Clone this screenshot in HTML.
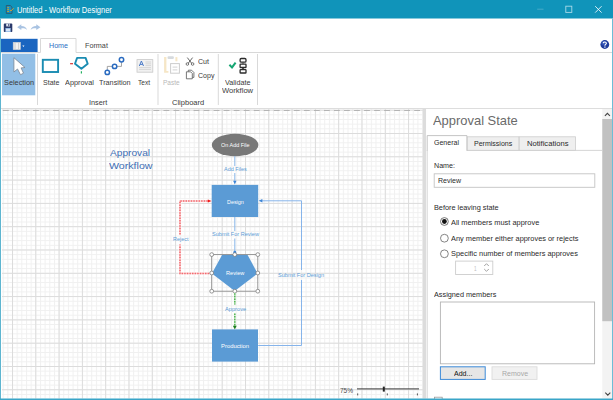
<!DOCTYPE html>
<html><head><meta charset="utf-8">
<style>
*{box-sizing:border-box;margin:0;padding:0}
html,body{width:613px;height:400px;overflow:hidden;background:#fff}
body{font-family:"Liberation Sans",sans-serif;font-size:8px;color:#333;position:relative}
.t{position:absolute;white-space:nowrap;line-height:1;transform-origin:0 0;display:inline-block}
svg{position:absolute;left:0;top:0}
</style></head><body>
<svg width="613" height="400" viewBox="0 0 613 400">
<defs>
<pattern id="minor" x="12.0" y="109.7" width="4.66" height="4.66" patternUnits="userSpaceOnUse">
<path d="M0.5 0V4.66M0 0.5H4.66" stroke="#f0f0f0" stroke-width="1" fill="none"/>
</pattern>
<pattern id="major" x="12.0" y="109.7" width="23.3" height="23.3" patternUnits="userSpaceOnUse">
<path d="M0.5 0V23.3M0 0.5H23.3" stroke="#dcdcdc" stroke-width="1" fill="none"/>
</pattern>
</defs>
<!-- window chrome -->
<rect x="0" y="0" width="613" height="18.5" fill="#1094ba"/>
<rect x="0" y="18.5" width="1" height="382" fill="#5eb5d0"/>
<rect x="612" y="18.5" width="1" height="382" fill="#6dbdd6"/>
<!-- title icon -->
<g>
<path d="M6.3 5.5H10.3L12 7.2V13.4H6.3Z" fill="#1a8fc0" stroke="#2d586c" stroke-width="0.9"/>
<rect x="7.3" y="7.2" width="1.6" height="1" fill="#d9a520"/>
<rect x="7.3" y="9.1" width="1.6" height="1" fill="#d9a520"/>
<rect x="7.3" y="11" width="1.6" height="1" fill="#d9a520"/>
<path d="M10 10.2L10.9 11L13.6 8.2" stroke="#d9a030" stroke-width="1" fill="none"/>
</g>
<!-- window buttons -->
<path d="M537.2 9.2H543.5" stroke="#46aac8" stroke-width="1"/>
<rect x="565.8" y="6.2" width="6" height="6.2" fill="none" stroke="#a9d9e8" stroke-width="0.9"/>
<path d="M595.2 6.2L601.6 12.6M601.6 6.2L595.2 12.6" stroke="#e8f5fa" stroke-width="0.9"/>

<!-- QAT -->
<g>
<rect x="3.8" y="23.6" width="8.5" height="8.4" rx="0.8" fill="#2b3a6b"/>
<rect x="6.2" y="23.6" width="3.8" height="2.8" fill="#dfe6f2"/>
<rect x="8.3" y="24" width="1" height="2" fill="#2b3a6b"/>
<rect x="5.4" y="28" width="5.3" height="4" fill="#9cc0ea"/>
<rect x="6" y="29.2" width="4" height="1.6" fill="#e6eefa"/>
</g>
<path d="M17.2 27.2L21.3 24.3V26C24.3 26 26.4 27.4 27 29.9C25.4 28.6 23.6 28.2 21.3 28.4V30.1Z" fill="#a9c3e2"/>
<path d="M40.4 27.2L36.3 24.3V26C33.3 26 31.2 27.4 30.6 29.9C32.2 28.6 34 28.2 36.3 28.4V30.1Z" fill="#a9c3e2"/>

<!-- tabs -->
<rect x="1" y="38.8" width="36.6" height="13.4" fill="#1a65c0"/>
<rect x="13.2" y="42.3" width="7.2" height="7.3" fill="#f2f2f2" stroke="#cfcfcf" stroke-width="0.6"/>
<path d="M15 42.5V49.5M18.6 42.5V49.5" stroke="#c4c4c4" stroke-width="0.8"/>
<path d="M22.3 45.6H24.5L23.4 46.9Z" fill="#ffffff"/>
<path d="M1 52.5H40.5V38.5H76V52.5H612" fill="none" stroke="#d8d8d8" stroke-width="1"/>
<!-- help -->
<circle cx="604.8" cy="44.5" r="4.4" fill="#1f3c9c"/>
<circle cx="603.8" cy="43.2" r="2.4" fill="#3b5cc0" opacity="0.7"/>
<path d="M603.3 43.2C603.3 41.6 606.4 41.6 606.4 43.3C606.4 44.4 604.9 44.5 604.9 45.7" stroke="#fff" stroke-width="1.1" fill="none"/>
<rect x="604.3" y="46.5" width="1.2" height="1.2" fill="#fff"/>

<!-- ribbon -->
<rect x="2" y="53.7" width="33.3" height="41.6" fill="#92bfe6"/>
<path d="M37.5 54V105M158 54V105M218.3 54V105M257.5 54V105" stroke="#d9d9d9" stroke-width="1"/>
<path d="M1 108.5H612" stroke="#dddddd" stroke-width="1"/>
<!-- cursor -->
<path d="M13.9 57.7V72L17.5 69L20.5 74.7L23.5 73.2L21.1 67.9L25 67.5Z" fill="#fff" stroke="#7b8794" stroke-width="0.8" stroke-linejoin="miter"/>
<!-- state -->
<rect x="42.8" y="59.8" width="15.3" height="12.2" fill="none" stroke="#1a8cb2" stroke-width="1.9"/>
<!-- approval -->
<path d="M77.1 57.9H85.6L87.7 63.7L81.4 68.8L75 63.7Z" fill="none" stroke="#1a8cb2" stroke-width="1.9" stroke-linejoin="round"/>
<path d="M70.1 63.7H73" stroke="#d83030" stroke-width="1.2"/>
<path d="M81.4 71.2V73.6" stroke="#22b060" stroke-width="1.2"/>
<!-- transition -->
<path d="M107.3 70V66.4H112.2M117 66.4H121.5V62.2" stroke="#9a9a9a" stroke-width="0.9" fill="none"/>
<circle cx="107.3" cy="72.4" r="2.2" fill="#fff" stroke="#2a6bc0" stroke-width="1.5"/>
<circle cx="114.6" cy="66.4" r="2.2" fill="#fff" stroke="#2a6bc0" stroke-width="1.5"/>
<circle cx="121.5" cy="59.7" r="2.2" fill="#fff" stroke="#2a6bc0" stroke-width="1.5"/>
<!-- text icon -->
<rect x="137" y="59.6" width="15.8" height="12.6" fill="#f1f1f1" stroke="#c9c9c9" stroke-width="0.8"/>
<path d="M145.5 62H151M145.5 63.8H151M145.5 65.6H151M139 67.6H151M139 69.4H151" stroke="#cfcfcf" stroke-width="0.8"/>
<path d="M139.3 66L141.4 61L143.5 66M140.1 64.4H142.7" stroke="#3b6fc4" stroke-width="0.9" fill="none"/>
<!-- paste -->
<path d="M164.1 57.1H166.4V71H168.4V72.7H164.1Z" fill="#f6e6c6"/>
<rect x="175.4" y="57.1" width="2" height="4.2" fill="#f6e6c6"/>
<rect x="167.5" y="56.2" width="6.4" height="2.7" rx="1.2" fill="#d6dade"/>
<rect x="170.6" y="63.6" width="8.8" height="9.6" fill="#fff" stroke="#cdcdcd" stroke-width="1"/>
<path d="M172.6 67.1H177.4M172.6 69.9H177.4" stroke="#d2d2d2" stroke-width="1"/>
<!-- cut -->
<path d="M187.3 57.6L191.6 63.2M192.6 57.6L188.3 63.2" stroke="#555" stroke-width="0.9"/>
<circle cx="187.4" cy="64" r="1.3" fill="none" stroke="#555" stroke-width="0.8"/>
<circle cx="192.6" cy="64" r="1.3" fill="none" stroke="#555" stroke-width="0.8"/>
<!-- copy -->
<path d="M186.4 71.8H190.6L192.3 73.5V78.8H186.4Z" fill="#fff" stroke="#555" stroke-width="0.8"/>
<path d="M188.3 71.6V70.2H191.6L193.9 72.5V77.4H192.5" fill="none" stroke="#555" stroke-width="0.8"/>
<!-- validate -->
<path d="M229.4 64.8L232 67.4L235.6 62.6" stroke="#17a673" stroke-width="2" fill="none"/>
<rect x="240.1" y="58.5" width="5.9" height="3.7" rx="1.2" fill="#fff" stroke="#2b2b2b" stroke-width="1.3"/>
<rect x="240.1" y="64.1" width="5.9" height="3.4" rx="0.6" fill="#fff" stroke="#2b2b2b" stroke-width="1.3"/>
<rect x="240.1" y="69.6" width="5.9" height="3.4" rx="0.6" fill="#fff" stroke="#2b2b2b" stroke-width="1.3"/>
<path d="M243 62.8V63.5M243 68.1V69" stroke="#2b2b2b" stroke-width="1.6"/>

<!-- canvas grid -->
<rect x="2" y="109" width="421" height="289.5" fill="url(#minor)"/>
<rect x="2" y="109" width="421" height="289.5" fill="url(#major)"/>
<path d="M3 110.5H423" stroke="#b4b4b4" stroke-width="1" stroke-dasharray="5.8 4.23"/>

<!-- diagram -->
<g fill="none">
<ellipse cx="235.1" cy="145" rx="23.3" ry="11.2" fill="#787878"/>
<path d="M234.8 156.2V166M234.8 173V182" stroke="#8ab8ea" stroke-width="1"/>
<path d="M233.1 180.8H236.5L234.8 184.6Z" fill="#3f86d6"/>
<rect x="211.7" y="184.9" width="46.5" height="32.1" fill="#5b9bd5"/>
<path d="M234.8 217V231M234.8 238.5V252.5" stroke="#8ab8ea" stroke-width="1"/>
<circle cx="234.8" cy="252.2" r="1.4" fill="#3f86d6"/>
<!-- reject -->
<path d="M211.7 273.4H180V244.5M180 234.5V201H208" stroke="#ffffff" stroke-width="2.8"/>
<path d="M211.7 273.4H180V244.5M180 234.5V201H208" stroke="#fbd3d3" stroke-width="1.7"/>
<path d="M211.7 273.4H180V244.5M180 234.5V201H208" stroke="#f26a70" stroke-width="1.5" stroke-dasharray="1.5 1.1"/>
<path d="M207.8 199.4V202.6L211.6 201Z" fill="#f01818"/>
<!-- submit for design -->
<path d="M258.2 345.5H301.5V280M301.5 270V200.8H262" stroke="#86b4ea" stroke-width="1"/>
<path d="M262.4 199.1V202.5L258.6 200.8Z" fill="#3f86d6"/>
<!-- review -->
<path d="M222.2 254.8H247.5L257.6 273.5L234.7 291L211.9 273.5Z" fill="#5b9bd5"/>
<rect x="211.7" y="254.6" width="46.1" height="36.6" stroke="#8c8c8c" stroke-width="0.9"/>
<g fill="#fff" stroke="#7d7d7d" stroke-width="0.8">
<circle cx="211.7" cy="254.6" r="1.9"/><circle cx="234.8" cy="254.6" r="1.9"/><circle cx="257.8" cy="254.6" r="1.9"/>
<circle cx="211.7" cy="273" r="1.9"/><circle cx="257.8" cy="273" r="1.9"/>
<circle cx="211.7" cy="291.2" r="1.9"/><circle cx="234.8" cy="291.2" r="1.9"/><circle cx="257.8" cy="291.2" r="1.9"/>
</g>
<!-- approve -->
<path d="M234.8 293.2V304.5M234.8 313.5V327" stroke="#ffffff" stroke-width="2.6"/>
<path d="M234.8 293.2V304.5M234.8 313.5V327" stroke="#cdebcd" stroke-width="1.7"/>
<path d="M234.8 293.2V304.5M234.8 313.5V327" stroke="#4db04d" stroke-width="1.4" stroke-dasharray="1.5 1.1"/>
<path d="M232.9 325.8H236.7L234.8 329.6Z" fill="#1d7d1d"/>
<rect x="212" y="329.4" width="46" height="32.2" fill="#5b9bd5"/>
</g>
<!-- zoom slider -->
<path d="M357 388.9H419" stroke="#3a3a3a" stroke-width="1"/>
<rect x="382.8" y="386.6" width="2" height="5" fill="#222"/>
<path d="M357.7 393.4V395.4M387.3 393.4V395.4M417.4 393.4V395.4" stroke="#444" stroke-width="0.9"/>

<!-- panel -->
<rect x="422.8" y="109" width="3.4" height="289.5" fill="#dcdcdc"/>
<rect x="426.2" y="109" width="176" height="289.5" fill="#fff"/>
<!-- tabs -->
<rect x="467" y="136.8" width="52" height="13.6" fill="#efefef" stroke="#cccccc" stroke-width="0.8"/>
<rect x="519.2" y="136.8" width="56.3" height="13.6" fill="#efefef" stroke="#cccccc" stroke-width="0.8"/>
<path d="M427.2 398.5V150.4M466.9 150.4H602" stroke="#d0d0d0" stroke-width="0.9" fill="none"/>
<path d="M427.2 151V135.6H466.9V150.6" stroke="#bdbdbd" stroke-width="0.9" fill="#fff"/>
<!-- input -->
<rect x="434.2" y="173.8" width="160.6" height="13.5" fill="#fff" stroke="#c4c4c4" stroke-width="0.9"/>
<!-- radios -->
<circle cx="444.4" cy="221.5" r="3.9" fill="#fff" stroke="#555" stroke-width="0.8"/>
<circle cx="444.4" cy="221.5" r="2.4" fill="#111"/>
<circle cx="444.4" cy="238.2" r="3.9" fill="#fff" stroke="#666" stroke-width="0.8"/>
<circle cx="444.4" cy="253.8" r="3.9" fill="#fff" stroke="#666" stroke-width="0.8"/>
<!-- spinner -->
<rect x="455.6" y="261.1" width="37.2" height="13.4" fill="#fff" stroke="#cdcdcd" stroke-width="0.9"/>
<path d="M484.2 266L486.5 263.7L488.8 266M484.2 269L486.5 271.3L488.8 269" stroke="#8a8a8a" stroke-width="0.8" fill="none"/>
<!-- listbox -->
<rect x="440.4" y="302" width="154.2" height="61.8" fill="#fff" stroke="#b4b4b4" stroke-width="0.9"/>
<!-- buttons -->
<rect x="440.4" y="366.8" width="44.8" height="12.6" fill="#e6e6e6" stroke="#3c8ad8" stroke-width="1"/>
<rect x="492" y="366.8" width="45" height="12.6" fill="#f1f1f1" stroke="#dcdcdc" stroke-width="0.9"/>
<!-- checkbox cut -->
<rect x="434.4" y="397.2" width="7.8" height="6" fill="#fff" stroke="#999" stroke-width="0.8"/>
<!-- scrollbar -->
<rect x="602.3" y="109" width="9.7" height="289.5" fill="#f3f3f3"/>
<rect x="602.3" y="119" width="9.7" height="202.2" fill="#c1c1c1"/>
<path d="M604.9 115.8L607.4 113.3L609.9 115.8" stroke="#444" stroke-width="1.1" fill="none"/>
<path d="M605.3 392.6L607.8 395.1L610.3 392.6" stroke="#444" stroke-width="1.1" fill="none"/>

<rect x="0" y="398.5" width="613" height="1.5" fill="#3aa5c8"/>
</svg>
<div class="t" id="t0" style="left:17.2px;top:6.27px;font-size:8.3px;color:#ffffff;font-weight:400;transform:scaleX(0.9030)">Untitled - Workflow Designer</div>
<div class="t" id="t1" style="left:48.9px;top:42.47px;font-size:7.6px;color:#2b6fc4;font-weight:400;transform:scaleX(0.9375)">Home</div>
<div class="t" id="t2" style="left:85.2px;top:42.47px;font-size:7.6px;color:#444;font-weight:400;transform:scaleX(0.9517)">Format</div>
<div class="t" id="t3" style="left:3.5px;top:79.17px;font-size:7.6px;color:#3a3a3a;font-weight:400;transform:scaleX(0.9632)">Selection</div>
<div class="t" id="t4" style="left:42.5px;top:79.17px;font-size:7.6px;color:#3a3a3a;font-weight:400;transform:scaleX(0.9248)">State</div>
<div class="t" id="t5" style="left:65px;top:79.17px;font-size:7.6px;color:#3a3a3a;font-weight:400;transform:scaleX(0.9672)">Approval</div>
<div class="t" id="t6" style="left:98.6px;top:79.17px;font-size:7.6px;color:#3a3a3a;font-weight:400;transform:scaleX(0.9558)">Transition</div>
<div class="t" id="t7" style="left:138.3px;top:79.17px;font-size:7.6px;color:#3a3a3a;font-weight:400;transform:scaleX(0.8682)">Text</div>
<div class="t" id="t8" style="left:88.5px;top:98.87px;font-size:7.6px;color:#3a3a3a;font-weight:400;transform:scaleX(0.9579)">Insert</div>
<div class="t" id="t9" style="left:163.1px;top:79.17px;font-size:7.6px;color:#b8b8b8;font-weight:400;transform:scaleX(0.8599)">Paste</div>
<div class="t" id="t10" style="left:197.5px;top:57.97px;font-size:7.6px;color:#3a3a3a;font-weight:400;transform:scaleX(0.9300)">Cut</div>
<div class="t" id="t11" style="left:197.5px;top:71.97px;font-size:7.6px;color:#3a3a3a;font-weight:400;transform:scaleX(0.9248)">Copy</div>
<div class="t" id="t12" style="left:172.2px;top:98.87px;font-size:7.6px;color:#3a3a3a;font-weight:400;transform:scaleX(0.9903)">Clipboard</div>
<div class="t" id="t13" style="left:225px;top:79.17px;font-size:7.6px;color:#3a3a3a;font-weight:400;transform:scaleX(0.9483)">Validate</div>
<div class="t" id="t14" style="left:222.3px;top:87.27px;font-size:7.6px;color:#3a3a3a;font-weight:400;transform:scaleX(1.0002)">Workflow</div>
<div class="t" id="t15" style="left:110.2px;top:147.50px;font-size:9.8px;color:#3f6fb5;font-weight:400;transform:scaleX(1.0369)">Approval</div>
<div class="t" id="t16" style="left:108.6px;top:161.30px;font-size:9.8px;color:#3f6fb5;font-weight:400;transform:scaleX(1.0845)">Workflow</div>
<div class="t" id="t17" style="left:220.5px;top:142.32px;font-size:6px;color:#ffffff;font-weight:400;transform:scaleX(0.9088)">On Add File</div>
<div class="t" id="t18" style="left:223.8px;top:166.32px;font-size:6px;color:#5b9bd5;font-weight:400;transform:scaleX(0.9074)">Add Files</div>
<div class="t" id="t19" style="left:226.7px;top:198.52px;font-size:6px;color:#ffffff;font-weight:400;transform:scaleX(0.8990)">Design</div>
<div class="t" id="t20" style="left:172.8px;top:236.02px;font-size:6px;color:#5b9bd5;font-weight:400;transform:scaleX(0.9051)">Reject</div>
<div class="t" id="t21" style="left:211.7px;top:231.32px;font-size:6px;color:#5b9bd5;font-weight:400;transform:scaleX(0.9253)">Submit For Review</div>
<div class="t" id="t22" style="left:225.7px;top:270.42px;font-size:6px;color:#ffffff;font-weight:400;transform:scaleX(0.9346)">Review</div>
<div class="t" id="t23" style="left:224.8px;top:305.52px;font-size:6px;color:#5b9bd5;font-weight:400;transform:scaleX(0.9481)">Approve</div>
<div class="t" id="t24" style="left:278.3px;top:272.02px;font-size:6px;color:#5b9bd5;font-weight:400;transform:scaleX(0.9258)">Submit For Design</div>
<div class="t" id="t25" style="left:221.1px;top:342.92px;font-size:6px;color:#ffffff;font-weight:400;transform:scaleX(0.9795)">Production</div>
<div class="t" id="t26" style="left:339.8px;top:386.73px;font-size:8px;color:#484848;font-weight:400;transform:scaleX(0.8117)">75%</div>
<div class="t" id="t27" style="left:433px;top:113.66px;font-size:13.4px;color:#6a6a6a;font-weight:400;transform:scaleX(0.9654)">Approval State</div>
<div class="t" id="t28" style="left:434px;top:139.07px;font-size:7.6px;color:#2a2a2a;font-weight:400;transform:scaleX(0.9249)">General</div>
<div class="t" id="t29" style="left:473.7px;top:140.47px;font-size:7.6px;color:#2a2a2a;font-weight:400;transform:scaleX(0.9236)">Permissions</div>
<div class="t" id="t30" style="left:526.7px;top:140.47px;font-size:7.6px;color:#2a2a2a;font-weight:400;transform:scaleX(1.0030)">Notifications</div>
<div class="t" id="t31" style="left:434px;top:161.57px;font-size:7.6px;color:#2a2a2a;font-weight:400;transform:scaleX(0.9385)">Name:</div>
<div class="t" id="t32" style="left:437.6px;top:177.37px;font-size:7.6px;color:#2a2a2a;font-weight:400;transform:scaleX(0.9235)">Review</div>
<div class="t" id="t33" style="left:434px;top:203.97px;font-size:7.6px;color:#2a2a2a;font-weight:400;transform:scaleX(0.9624)">Before leaving state</div>
<div class="t" id="t34" style="left:451.4px;top:218.57px;font-size:7.6px;color:#2a2a2a;font-weight:400;transform:scaleX(0.9775)">All members must approve</div>
<div class="t" id="t35" style="left:451.4px;top:234.77px;font-size:7.6px;color:#2a2a2a;font-weight:400;transform:scaleX(0.9737)">Any member either approves or rejects</div>
<div class="t" id="t36" style="left:451.4px;top:250.37px;font-size:7.6px;color:#2a2a2a;font-weight:400;transform:scaleX(0.9762)">Specific number of members approves</div>
<div class="t" id="t37" style="left:473.6px;top:264.97px;font-size:7.6px;color:#bdbdbd;font-weight:400;transform:scaleX(0.6140)">1</div>
<div class="t" id="t38" style="left:434.2px;top:291.27px;font-size:7.6px;color:#2a2a2a;font-weight:400;transform:scaleX(0.9585)">Assigned members</div>
<div class="t" id="t39" style="left:453.5px;top:370.07px;font-size:7.6px;color:#111;font-weight:400;transform:scaleX(0.9272)">Add...</div>
<div class="t" id="t40" style="left:501.7px;top:370.07px;font-size:7.6px;color:#a8a8a8;font-weight:400;transform:scaleX(0.9229)">Remove</div>
</body></html>
